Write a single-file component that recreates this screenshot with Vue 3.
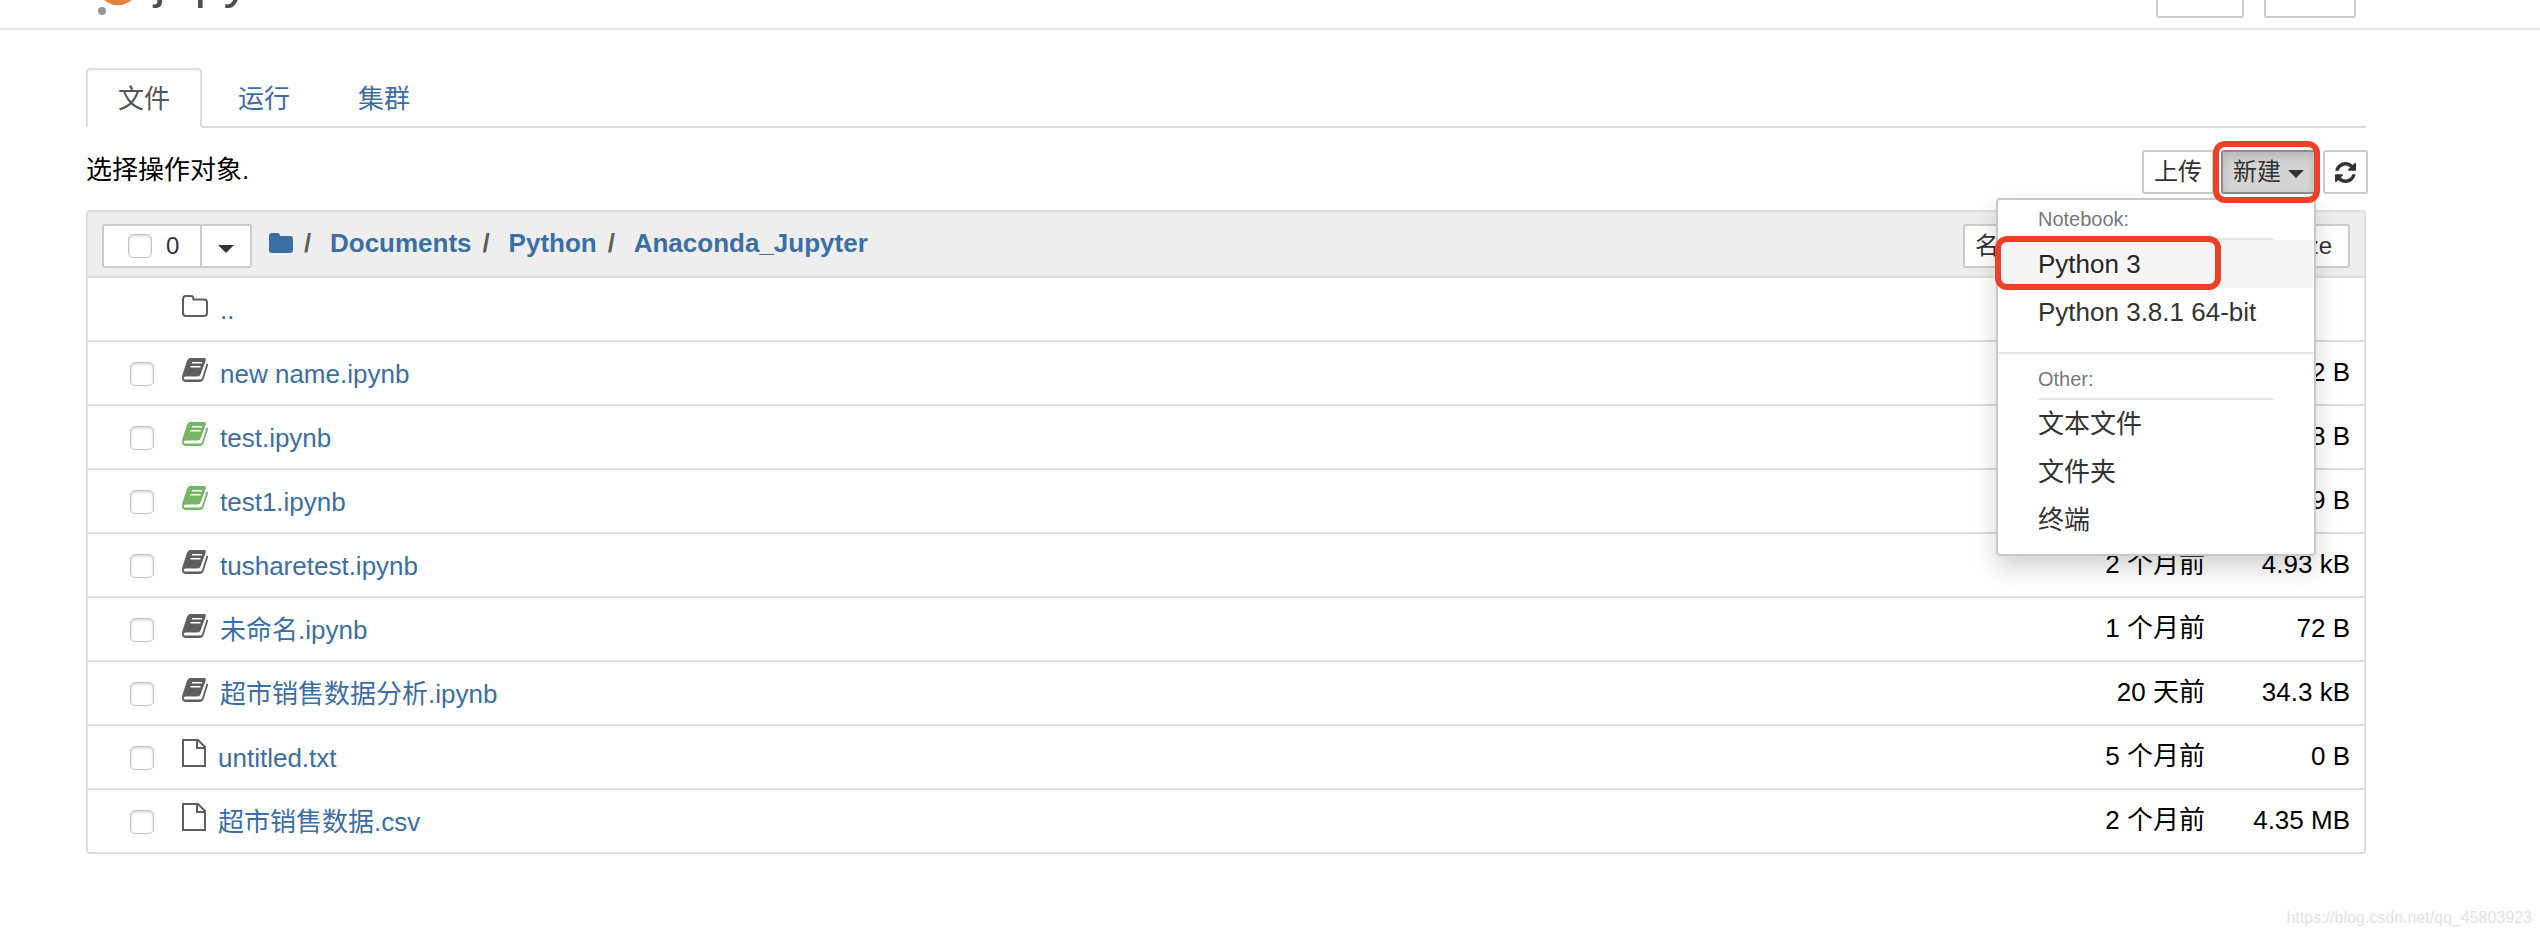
<template>
  <div class="page">
    <header class="site-header">
      <a href="#" class="logo" aria-label="Jupyter Notebook">
        <svg class="logo-mark" width="44" height="18" viewBox="0 0 44 18" aria-hidden="true">
          <path d="M4-6A20 20 0 0 0 40-6A27 16 0 0 1 4-6Z" fill="#e8803c" />
          <circle cx="6" cy="11" r="4" fill="#989798" />
        </svg>
        <span class="logo-text">jupyter</span>
      </a>
      <div class="session-buttons">
        <button type="button" class="btn session-btn" aria-label="退出"></button>
        <button type="button" class="btn session-btn wide" aria-label="注销"></button>
      </div>
    </header>

    <main class="container">
      <nav class="tabs">
        <a
          v-for="tab in tabs"
          :key="tab"
          href="#"
          class="tab"
          :class="{ active: tab === activeTab }"
          @click.prevent="activeTab = tab"
        >{{ tab }}</a>
      </nav>

      <div class="toolbar">
        <p class="hint">选择操作对象.</p>
        <div class="actions">
          <button type="button" class="btn">上传</button>
          <div class="new-wrap">
            <button type="button" class="btn pressed" @click="menuOpen = !menuOpen">
              新建<span class="caret"></span>
            </button>
            <span class="mark mark-new"></span>
            <!-- 新建下拉菜单 -->
            <div v-if="menuOpen" class="menu">
              <div class="menu-header">Notebook:</div>
              <a href="#" class="menu-item current">Python 3<span class="mark mark-kernel"></span></a>
              <a href="#" class="menu-item">Python 3.8.1 64-bit</a>
              <div class="menu-divider"></div>
              <div class="menu-header">Other:</div>
              <a v-for="item in others" :key="item" href="#" class="menu-item">{{ item }}</a>
            </div>
          </div>
          <button type="button" class="btn refresh" aria-label="刷新">
            <svg width="21" height="21" viewBox="0 0 1536 1536" aria-hidden="true">
              <path fill="#333" d="M1511 928q0 5-1 7-64 268-268 434.500T764 1536q-146 0-282.500-55T238 1324l-129 129q-19 19-45 19t-45-19-19-45V960q0-26 19-45t45-19h448q26 0 45 19t19 45-19 45l-137 137q71 66 161 102t187 36q134 0 250-65t186-179q11-17 53-117 8-23 30-23h192q13 0 22.500 9.500t9.500 22.500zm25-800v448q0 26-19 45t-45 19h-448q-26 0-45-19t-19-45 19-45l138-138Q969 256 768 256q-134 0-250 65T332 500q-11 17-53 117-8 23-30 23H50q-13 0-22.500-9.500T18 608v-7q65-268 270-434.500T768 0q146 0 284 55.500T1297 212l130-129q19-19 45-19t45 19 19 45z" />
            </svg>
          </button>
        </div>
      </div>

      <section class="list">
        <div class="list-header">
          <div class="select-group">
            <label class="select-all"><input type="checkbox" class="check" />0</label>
            <button type="button" class="select-drop" aria-label="选择类型"><span class="caret"></span></button>
          </div>
          <nav class="crumbs">
            <a href="#" aria-label="主目录">
              <svg class="crumb-icon" width="24" height="20" viewBox="0 0 24 20" aria-hidden="true">
                <path d="M3 0H8Q11 0 11 3H21Q24 3 24 6V17Q24 20 21 20H3Q0 20 0 17V3Q0 0 3 0Z" fill="#3b6ea5" />
              </svg>
            </a>
            <template v-for="dir in path" :key="dir">
              <span class="slash">/</span><a href="#">{{ dir }}</a>
            </template>
          </nav>
          <div class="sort">
            <button type="button" class="btn">名字</button>
            <button type="button" class="btn">最后修改</button>
            <button type="button" class="btn sort-size">File size</button>
          </div>
        </div>

        <table class="files">
          <tbody>
            <tr v-for="file in files" :key="file.name">
              <td class="cell-check">
                <input v-if="file.type !== 'folder'" type="checkbox" class="check" :aria-label="file.name" />
              </td>
              <td class="cell-icon">
                <svg v-if="file.type === 'folder'" class="icon" width="26" height="22" viewBox="0 0 26 22" aria-hidden="true">
                  <path d="M1 4Q1 1 4 1H9Q11.500 1 11.500 4.500H22Q25 4.500 25 7.500V18Q25 21 22 21H4Q1 21 1 18Z" fill="none" stroke="#5e5e5e" stroke-width="2" />
                </svg>
                <svg v-else-if="file.type === 'file'" class="icon icon-file" width="24" height="28" viewBox="0 0 24 28" aria-hidden="true">
                  <path d="M1 1H16L23 8V27H1ZM15 1V9H23" fill="none" stroke="#5e5e5e" stroke-width="2" />
                </svg>
                <svg v-else class="icon" :class="{ running: file.running }" width="26" height="24" viewBox="0 0 26 24" aria-hidden="true">
                  <path d="M8 0H22Q24.500 0 23.700 2.500L18.500 16.500Q17.800 18.500 15.500 18.500H3.500Q1.700 18.500 1.700 20T3.500 21.600H17.500Q19.500 21.600 20.200 19.700L24.600 5.500Q26.500 5.500 25.900 7.500L21.600 21Q20.700 24 17.800 24H4Q0 24 0 20Q0 17 1 15L5 3Q6 0 8 0Z" fill="currentColor" />
                  <path d="M10 4.700H20M8.500 8.700H18.500" stroke="#fff" stroke-width="1.600" />
                </svg>
              </td>
              <td class="cell-name" :class="{ plain: file.type === 'file' }"><a href="#">{{ file.name }}</a></td>
              <td class="cell-date">{{ file.modified }}</td>
              <td class="cell-size">{{ file.size }}</td>
            </tr>
          </tbody>
        </table>
      </section>
    </main>

    <footer class="watermark">https://blog.csdn.net/qq_45803923</footer>
  </div>
</template>

<script setup>
import { ref } from 'vue'

const tabs = ['文件', '运行', '集群']
const activeTab = ref('文件')
const menuOpen = ref(true)
const others = ['文本文件', '文件夹', '终端']
const path = ['Documents', 'Python', 'Anaconda_Jupyter']

const files = [
  { name: '..', type: 'folder' },
  { name: 'new name.ipynb', type: 'notebook', modified: '1 个月前', size: '72 B' },
  { name: 'test.ipynb', type: 'notebook', running: true, modified: '1 个月前', size: '618 B' },
  { name: 'test1.ipynb', type: 'notebook', running: true, modified: '1 个月前', size: '589 B' },
  { name: 'tusharetest.ipynb', type: 'notebook', modified: '2 个月前', size: '4.93 kB' },
  { name: '未命名.ipynb', type: 'notebook', modified: '1 个月前', size: '72 B' },
  { name: '超市销售数据分析.ipynb', type: 'notebook', modified: '20 天前', size: '34.3 kB' },
  { name: 'untitled.txt', type: 'file', modified: '5 个月前', size: '0 B' },
  { name: '超市销售数据.csv', type: 'file', modified: '2 个月前', size: '4.35 MB' }
]
</script>

<style>
body {
  background: #fff;
}
</style>

<style scoped>
.page,
.page * {
  box-sizing: border-box;
}

.page {
  font-family: "Liberation Sans", "Noto Sans CJK SC", sans-serif;
  font-size: 26px;
  line-height: 36px;
  color: #000;
}

a {
  color: #3b6ea5;
  text-decoration: none;
}

/* 顶部栏 */
.site-header {
  display: flex;
  justify-content: space-between;
  align-items: flex-start;
  height: 30px;
  padding: 0 184px 0 96px;
  border-bottom: 2px solid #e7e7e7;
  overflow: hidden;
}

.logo {
  display: flex;
  align-items: flex-end;
  height: 18px;
}

.logo-mark {
  flex: none;
}

.logo-text {
  margin: 0 0 9px 14px;
  font-size: 52px;
  line-height: 60px;
  color: #4e4e4e;
}

.session-buttons {
  display: flex;
  gap: 20px;
}

.btn {
  display: flex;
  align-items: center;
  height: 44px;
  padding: 0 10px;
  border: 2px solid #ccc;
  border-radius: 3px;
  background: #fff;
  color: #333;
  font-family: inherit;
  font-size: 24px;
  line-height: 36px;
  white-space: nowrap;
}

.session-btn {
  width: 88px;
  height: 18px;
  border-top: 0;
  border-radius: 0 0 3px 3px;
}

.session-btn.wide {
  width: 92px;
}

.container {
  padding: 38px 174px 0 86px;
}

/* 标签页 */
.tabs {
  display: flex;
  gap: 4px;
  border-bottom: 2px solid #ddd;
}

.tab {
  height: 60px;
  margin-bottom: -2px;
  padding: 11px 30px;
  border: 2px solid transparent;
  border-radius: 4px 4px 0 0;
}

.tab.active {
  border-color: #ddd #ddd #fff;
  background: #fff;
  color: #555;
}

.toolbar {
  display: flex;
  justify-content: space-between;
  align-items: flex-start;
  height: 82px;
  padding-top: 22px;
}

.hint {
  margin: 0;
  line-height: 40px;
}

.actions {
  display: flex;
  gap: 7px;
  margin-right: -2px;
}

.refresh {
  width: 45px;
}

.pressed {
  border-color: #8c8c8c;
  background: #d4d4d4;
  box-shadow: inset 0 6px 10px rgba(0, 0, 0, 0.125);
}

.caret {
  border-top: 8px solid #333;
  border-left: 8px solid transparent;
  border-right: 8px solid transparent;
}

.pressed .caret {
  margin: 4px 0 0 7px;
}

.new-wrap {
  position: relative;
}

/* 红色标注框 */
.mark {
  position: absolute;
  border: 6px solid #ee4026;
  border-radius: 12px;
  pointer-events: none;
}

.mark-new {
  inset: -9px -4px -9px -8px;
  z-index: 3;
}

.mark-kernel {
  top: -4px;
  left: -3px;
  width: 226px;
  height: 54px;
}

/* 下拉菜单 */
.menu {
  position: absolute;
  top: 48px;
  right: 0;
  z-index: 2;
  width: 320px;
  padding-bottom: 10px;
  border: 2px solid #c8c8c8;
  border-radius: 4px;
  background: #fff;
  box-shadow: 0 12px 24px rgba(0, 0, 0, 0.175);
}

.menu-header {
  margin: 0 40px;
  border-bottom: 2px solid #e5e5e5;
  color: #777;
  font-size: 20px;
  line-height: 38px;
}

.menu-item {
  position: relative;
  display: block;
  padding: 0 40px;
  color: #333;
  line-height: 48px;
}

.menu-item.current {
  background: #f5f5f5;
  color: #262626;
}

.menu-divider {
  height: 2px;
  margin: 16px 0 6px;
  background: #e5e5e5;
}

/* 文件列表 */
.list {
  border: 2px solid #ddd;
  border-radius: 4px;
}

.list-header {
  display: flex;
  align-items: center;
  height: 64px;
  padding: 4px 14px 0;
  background: #eee;
}

.list-header > * {
  flex: none;
}

.select-group {
  display: flex;
  height: 44px;
  border: 2px solid #ccc;
  border-radius: 3px;
  background: #fff;
}

.select-all {
  display: flex;
  align-items: center;
  gap: 14px;
  width: 96px;
  padding-left: 24px;
  color: #333;
  font-size: 24px;
}

.select-drop {
  display: flex;
  align-items: center;
  justify-content: center;
  width: 50px;
  padding: 6px 0 0;
  border: 0;
  border-left: 2px solid #ccc;
  background: none;
}

.check {
  appearance: none;
  display: block;
  width: 24px;
  height: 24px;
  margin: 0;
  border: 1px solid #c4c4c4;
  border-radius: 5px;
  background: #fff;
  box-shadow: inset 0 1px 3px rgba(0, 0, 0, 0.2);
}

.crumbs {
  display: flex;
  align-items: center;
  margin-left: 17px;
  padding-bottom: 6px;
  font-weight: bold;
}

.crumb-icon {
  display: block;
}

.slash {
  width: 37px;
  padding-left: 11px;
  color: #5e5e5e;
}

.sort {
  display: flex;
  justify-content: space-between;
  width: 387px;
  margin-left: auto;
}

.sort-size {
  padding-right: 16px;
}

.files {
  width: 100%;
  border-spacing: 0;
}

.files td {
  height: 64px;
  padding: 0;
  border-top: 2px solid #ddd;
}

.files .cell-check {
  width: 94px;
  padding: 2px 0 0 42px;
}

.files .cell-icon {
  width: 36px;
  padding-bottom: 6px;
}

.icon {
  display: block;
  color: #5e5e5e;
}

.icon.running {
  color: #74b566;
}

.icon-file {
  margin-bottom: 2px;
}

.files .cell-name {
  padding: 2px 0 0 2px;
}

.files .cell-name.plain {
  padding-left: 0;
}

.files .cell-date,
.files .cell-size {
  padding-bottom: 2px;
  text-align: right;
  white-space: nowrap;
}

.files .cell-date {
  width: 145px;
}

.files .cell-size {
  width: 159px;
  padding-right: 14px;
}

.watermark {
  padding: 46px 8px 0 0;
  color: #e2e2e2;
  font-size: 16px;
  text-align: right;
}
</style>
